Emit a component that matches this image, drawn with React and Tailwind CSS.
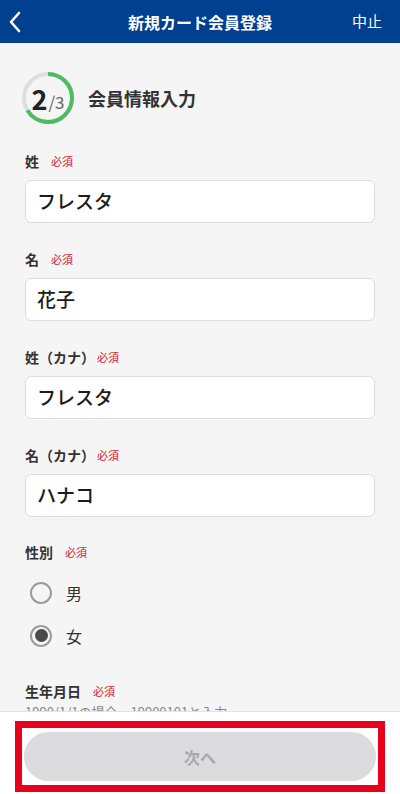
import React from 'react';

const FONT = { fontFamily: '"Noto Sans CJK JP", "Noto Sans", sans-serif' };

function Label({ text, className = 'mt-[26px]', tight = false }) {
  return (
    <div className={`flex items-center h-[20px] ${className}`}>
      <span className="text-[14px] font-bold text-[#333]">{text}</span>
      <span className={`${tight ? 'ml-[2px]' : 'ml-[12px]'} text-[11px] text-[#d2153d]`}>必須</span>
    </div>
  );
}

function Field({ label, value, first, tight }) {
  return (
    <div>
      <Label text={label} tight={tight} className={first ? 'mt-[27px]' : 'mt-[26px]'} />
      <div className="mt-[9px] h-[43px] bg-white border border-[#dcdcdc] rounded-[6px] flex items-center pl-[11px]">
        <span className="text-[19px] font-medium text-[#1e1a18]">{value}</span>
      </div>
    </div>
  );
}

function Radio({ label, checked }) {
  return (
    <div className="flex items-center h-[43px] pl-[5px]">
      <div className="w-[22px] h-[22px] rounded-full border-2 border-[#9b9b9b] flex items-center justify-center">
        {checked && <div className="w-[13px] h-[13px] rounded-full bg-[#4a4a4a]" />}
      </div>
      <span className="ml-[14px] text-[16px] text-[#333]">{label}</span>
    </div>
  );
}

function StepRing() {
  // green arc covers 2/3 of the circle, starting at 12 o'clock
  const r = 24;
  const c = 2 * Math.PI * r;
  return (
    <div className="relative w-[52px] h-[52px]">
      <svg width="52" height="52" viewBox="0 0 52 52" className="-rotate-90">
        <circle cx="26" cy="26" r={r} fill="none" stroke="#dedede" strokeWidth="4" />
        <circle
          cx="26"
          cy="26"
          r={r}
          fill="none"
          stroke="#4cbc5e"
          strokeWidth="4"
          strokeDasharray={`${c * 0.66} ${c}`}
        />
      </svg>
      <div className="absolute inset-0 flex items-center justify-center pt-[1px]">
        <span className="text-[27px] font-bold text-[#222] leading-none">2</span>
        <span className="text-[17px] text-[#666] leading-none mt-[6px] ml-[1px]">/3</span>
      </div>
    </div>
  );
}

export default function App() {
  return (
    <div className="h-screen w-full flex flex-col bg-[#f5f5f5] overflow-hidden" style={FONT}>
      {/* header */}
      <div className="h-[43px] shrink-0 bg-[#013f8f] flex items-center relative">
        <svg width="14" height="22" viewBox="0 0 14 22" className="ml-[8px]">
          <path d="M11 2 L3 11 L11 20" fill="none" stroke="white" strokeWidth="2.6" strokeLinecap="round" strokeLinejoin="round" />
        </svg>
        <div className="absolute left-0 right-0 text-center text-[16px] font-bold text-white pointer-events-none">
          新規カード会員登録
        </div>
        <span className="ml-auto mr-[18px] text-[15px] text-white">中止</span>
      </div>

      {/* form */}
      <div className="flex-1 overflow-hidden px-[25px]">
        <div className="flex items-center mt-[29px] -ml-[3px]">
          <StepRing />
          <span className="ml-[14px] text-[18px] font-bold text-[#333]">会員情報入力</span>
        </div>

        <Field label="姓" value="フレスタ" first />
        <Field label="名" value="花子" />
        <Field label="姓（カナ）" value="フレスタ" tight />
        <Field label="名（カナ）" value="ハナコ" tight />

        <Label text="性別" className="mt-[25px]" />
        <div className="mt-[9px]">
          <Radio label="男" />
          <Radio label="女" checked />
        </div>

        <Label text="生年月日" className="mt-[24px]" />
        <div className="text-[13px] text-[#888] leading-[20px] mt-[1px]">1990/1/1の場合、19900101と入力</div>
      </div>

      {/* footer */}
      <div className="h-[83px] shrink-0 bg-white border-t border-[#e2e2e2] px-[15px] pt-[9px]">
        <div className="h-[71px] border-[7px] border-[#e8001c] pt-[4px] pb-[3px] px-[2px]">
          <button className="w-full h-[49px] rounded-full bg-[#dcdcde] text-[16px] font-bold text-[#a8a8aa]">
            次へ
          </button>
        </div>
      </div>
    </div>
  );
}
